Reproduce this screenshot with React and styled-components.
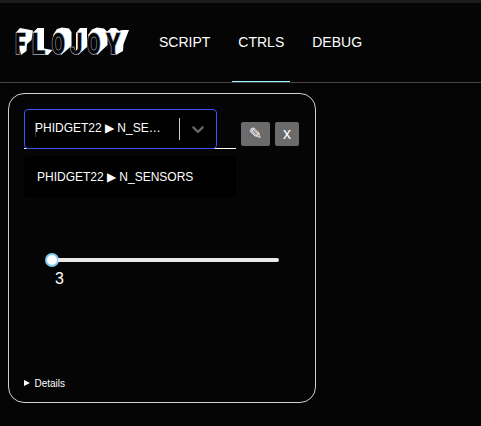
import React from "react";
import styled, { createGlobalStyle } from "styled-components";

const GlobalStyle = createGlobalStyle`
  * { box-sizing: border-box; }
  body {
    margin: 0;
    background: #050505;
    color: #fff;
    font-family: "Liberation Sans", Arial, sans-serif;
    overflow: hidden;
  }
`;

const Page = styled.div`
  height: 426px;
  border-top: 3px solid #1a1b1e;
`;

const Header = styled.header`
  display: flex;
  height: 80px;
  padding-left: 12px;
  border-bottom: 1px solid #444;
`;

const Logo = styled.svg`
  display: block;
  width: 121px;
  height: 40px;
  margin: 20px 20px 0 0;
  font-family: Roboto, sans-serif;
  font-weight: 700;
  font-size: 29.5px;
`;

const Front = styled.text`
  fill: #050505;
  stroke: #a9adb2;
  stroke-width: 1.4px;
  paint-order: stroke;
`;

const Nav = styled.nav`
  display: flex;
  gap: 16px;
`;

const Tab = styled.a`
  display: flex;
  align-items: center;
  height: 79px;
  padding: 0 6px;
  font-size: 14px;
  border-bottom: 1px solid ${(p) => (p.$active ? "#99f5ff" : "transparent")};
`;

const Card = styled.section`
  display: flex;
  flex-direction: column;
  width: 308px;
  height: 310px;
  margin: 10px 0 0 8px;
  padding: 15px;
  border: 1px solid #d0d0d0;
  border-radius: 16px;
`;

const CardHeader = styled.div`
  display: flex;
  gap: 5px;
`;

const SelectColumn = styled.div`
  width: 212px;
`;

const SelectLine = styled.div`
  height: 40px;
  border-bottom: 1px solid #fff;
`;

const Select = styled.div`
  display: flex;
  align-items: center;
  width: 193px;
  height: 40px;
  padding-left: 10px;
  background: #000;
  border: 1px solid #3f51ff;
  border-radius: 4px;
  font-size: 12px;
`;

const Value = styled.span`
  width: 144px;
  padding-bottom: 2px;
  white-space: nowrap;
`;

const Caret = styled.span`
  width: 1px;
  height: 15px;
  margin: 0 -1px 0 0;
  background: #3d3d3d;
`;

const Separator = styled.span`
  width: 1px;
  height: 22px;
  background: #ccc;
`;

const Chevron = styled.svg`
  width: 20px;
  height: 20px;
  margin-left: 8px;
  fill: #666;
`;

const Menu = styled.div`
  height: 42px;
  margin-top: 7px;
  padding: 14px 13px;
  background: #000;
  border-radius: 4px;
  font-size: 12px;
  line-height: 14px;
`;

const Actions = styled.div`
  display: flex;
  gap: 5px;
  padding-top: 13px;
`;

const ActionButton = styled.button`
  width: ${(p) => p.$width}px;
  height: 24px;
  padding: 0;
  border: 0;
  border-radius: 2px;
  background: #6b6b6b;
  color: #fff;
  font-family: "Liberation Sans", "DejaVu Sans", sans-serif;
  font-size: 16px;
  line-height: 24px;
`;

const Slider = styled.div`
  display: flex;
  align-items: center;
  width: 234px;
  height: 14px;
  margin: 55px 0 0 21px;
`;

const Thumb = styled.span`
  width: 14px;
  height: 14px;
  border: 2px solid #7ecbf5;
  border-radius: 50%;
  background: #fff;
`;

const Track = styled.span`
  flex: 1;
  height: 4px;
  margin-left: -1px;
  border-radius: 0 2px 2px 0;
  background: #e9e9e9;
`;

const SliderValue = styled.div`
  margin: 3px 0 0 31px;
  font-size: 16px;
  line-height: 18px;
`;

const Details = styled.div`
  display: flex;
  align-items: center;
  gap: 4.5px;
  height: 12px;
  margin: auto 0 -2px;
  font-size: 10px;
`;

const Triangle = styled.span`
  border: solid transparent;
  border-width: 3.5px 0 3.5px 6px;
  border-left-color: #fff;
`;

// Each logo letter: its position, width scale and the white side faces behind it.
const LETTERS = [
  { char: "F", x: 15, scale: 0.66, side: "16,32.5 20,28 33,30.5 31.5,40 27,44 26.5,51 21,55" },
  { char: "L", x: 31.8, scale: 0.85, side: "33,32.5 37.5,28 44,28 44,48.5 52.5,50 48,55 38,54" },
  { char: "O", x: 51.6, scale: 0.67, side: "53,35 57,29 62,27.5 69,28.5 71.5,32 71.5,46 61,55" },
  { char: "J", x: 70.3, scale: 0.74, side: "76,33 80,28 87,28 87,47 78,55 76,50" },
  { char: "O", x: 87, scale: 0.67, side: "88,35 92,29.5 97,27.5 104,28.5 107.5,32 107.5,45 97,55" },
  { char: "Y", x: 106, scale: 0.78, side: "106,32.5 111,28 116,28 119,31 122,30 129,30 123.5,44 123,51 116,55" },
];

export default function App() {
  return (
    <>
      <GlobalStyle />
      <Page>
        <Header>
          <Logo viewBox="12 23 121 40" aria-label="Flojoy">
            {LETTERS.map((l) => (
              <polygon key={l.x} points={l.side} fill="#fff" />
            ))}
            <ellipse cx="58.4" cy="43.5" rx="3.6" ry="8" fill="#050505" />
            <ellipse cx="93.8" cy="43.5" rx="3.6" ry="8" fill="#050505" />
            {LETTERS.map((l) => (
              <Front key={l.x} transform={`translate(${l.x} 54) scale(${l.scale} 1)`}>
                {l.char}
              </Front>
            ))}
          </Logo>
          <Nav>
            <Tab>SCRIPT</Tab>
            <Tab $active>CTRLS</Tab>
            <Tab>DEBUG</Tab>
          </Nav>
        </Header>
        <Card>
          <CardHeader>
            <SelectColumn>
              <SelectLine>
                <Select>
                  <Caret />
                  <Value>PHIDGET22 ▶ N_SE…</Value>
                  <Separator />
                  <Chevron viewBox="0 0 20 20">
                    <path d="M4.516 7.548c0.436-0.446 1.043-0.481 1.576 0l3.908 3.747 3.908-3.747c0.533-0.481 1.141-0.446 1.574 0 0.436 0.445 0.408 1.197 0 1.615-0.406 0.418-4.695 4.502-4.695 4.502-0.217 0.223-0.502 0.335-0.787 0.335s-0.57-0.112-0.789-0.335c0 0-4.287-4.084-4.695-4.502s-0.436-1.17 0-1.615z" />
                  </Chevron>
                </Select>
              </SelectLine>
              <Menu>PHIDGET22 ▶ N_SENSORS</Menu>
            </SelectColumn>
            <Actions>
              <ActionButton $width={29}>✎</ActionButton>
              <ActionButton $width={24}>x</ActionButton>
            </Actions>
          </CardHeader>
          <Slider>
            <Thumb />
            <Track />
          </Slider>
          <SliderValue>3</SliderValue>
          <Details>
            <Triangle />
            Details
          </Details>
        </Card>
      </Page>
    </>
  );
}
